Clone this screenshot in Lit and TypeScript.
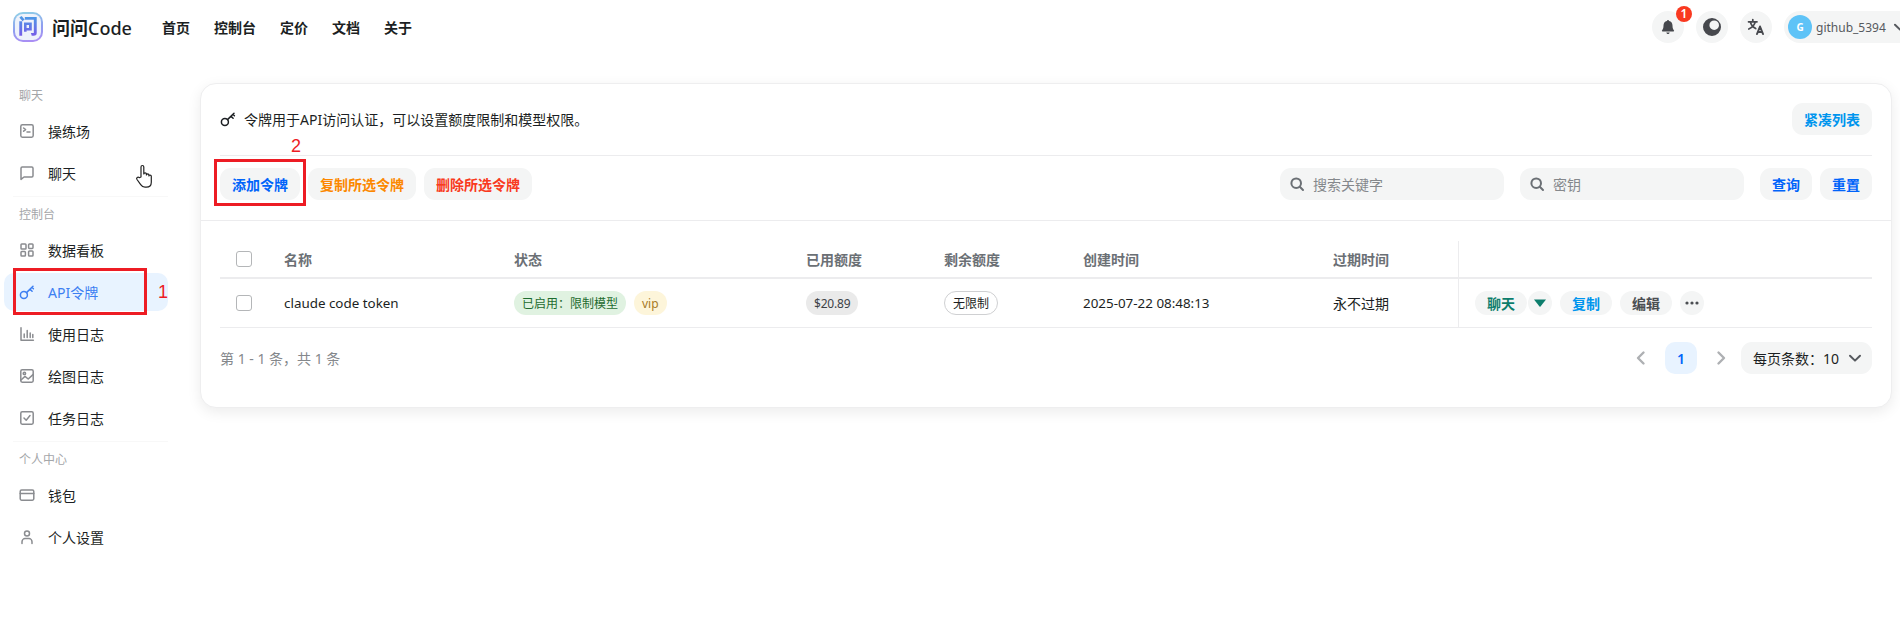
import { LitElement, html, css, svg } from "lit";
import { customElement } from "lit/decorators.js";

const ico = (body: unknown, size = 16) => html`<svg class="ico" width=${size} height=${size} viewBox="0 0 16 16" fill="none" stroke="currentColor" stroke-width="1.5" stroke-linecap="round" stroke-linejoin="round">${body}</svg>`;

const keyPaths = svg`<circle cx="4.9" cy="11.1" r="3.5"/><path d="M7.5 8.6 14 2.2M11 5.2l2.1 2M13 3.3l1.4 1.4"/>`;
const icons: Record<string, unknown> = {
  play: svg`<rect x="1.8" y="1.8" width="12.4" height="12.4" rx="1.6"/><path d="M4.6 5l2 1.6-2 1.6M8 9h3"/>`,
  chat: svg`<path d="M3.2 2h9.6c.7 0 1.2.5 1.2 1.2v7.6c0 .7-.5 1.2-1.2 1.2H5l-3 2.4V3.200c0-.7.5-1.200 1.200-1.200z"/>`,
  grid: svg`<rect x="2" y="2" width="5" height="5" rx=".8"/><rect x="9.600" y="2" width="4.400" height="4.400" rx=".8"/><rect x="2" y="9.600" width="4.400" height="4.400" rx=".8"/><rect x="9.600" y="9" width="4.400" height="5" rx=".8"/>`,
  key: keyPaths,
  bars: svg`<path d="M2 1.800V14.200H14.400M5.200 8v3.600M8.200 4.400v7.200M11.200 7v4.600M13.800 8.600v3"/>`,
  image: svg`<rect x="1.800" y="1.800" width="12.400" height="12.400" rx="1.400"/><circle cx="5.400" cy="5.400" r="1.200"/><path d="M2 12l4-3.600 3.200 2.600L14 6.600"/>`,
  check: svg`<rect x="1.800" y="1.800" width="12.400" height="12.400" rx="1.400"/><path d="M5 8l2.200 2.200L11 5.600"/>`,
  card: svg`<rect x="1.200" y="3" width="13.600" height="10.200" rx="1.400"/><path d="M1.200 6.400h13.600"/>`,
  user: svg`<circle cx="8" cy="4.400" r="2.500"/><path d="M3 14.400v-1.600c0-2 1.600-3.200 3-3.200h4c1.400 0 3 1.200 3 3.200v1.600"/>`,
};

const chevDown = html`<svg class="chev" width="16" height="16" viewBox="0 0 16 16" fill="none" stroke="currentColor" stroke-width="2" stroke-linecap="round" stroke-linejoin="round"><path d="M3 5.800 8 10.600l5-4.800"/></svg>`;
const search = html`<svg class="sicon" width="16" height="16" viewBox="0 0 16 16" fill="none" stroke="#6b7075" stroke-width="2" stroke-linecap="round"><circle cx="7.200" cy="7.200" r="4.800"/><path d="M10.800 10.800l3.200 3.200"/></svg>`;

const nav = [
  { label: "聊天", items: [["play", "操练场"], ["chat", "聊天"]] },
  { label: "控制台", items: [["grid", "数据看板"], ["key", "API令牌"], ["bars", "使用日志"], ["image", "绘图日志"], ["check", "任务日志"]] },
  { label: "个人中心", items: [["card", "钱包"], ["user", "个人设置"]] },
];

@customElement("app-root")
export class AppRoot extends LitElement {
  static styles = css`
    :host { display: block; position: relative; width: 1900px; height: 625px; overflow: hidden; background: #fff; color: #1c1f23; font-family: "Noto Sans", "Noto Sans CJK SC", sans-serif; font-size: 14px; }
    * { box-sizing: border-box; }
    .ico { display: block; flex: none; }
    header { height: 54px; display: flex; align-items: center; padding: 0 0 0 13px; }
    .logo { width: 30px; height: 30px; border-radius: 10px; padding: 2px; background: linear-gradient(170deg, #8fd3e6, #8f9df0 55%, #b08cf5); flex: none; margin-right: 9px; }
    .logo-in { width: 100%; height: 100%; border-radius: 8px; background: #eef2fb; display: flex; align-items: center; justify-content: center; }
    .logo-ch { font-size: 20px; line-height: 22px; font-weight: 900; background: linear-gradient(180deg, #4a9be6, #7b55e8); -webkit-background-clip: text; background-clip: text; color: transparent; }
    .brand { font-size: 18px; font-weight: 500; margin-right: 32px; width: 78px; white-space: nowrap; }
    .brand b { font-weight: 700; }
    .nav { display: flex; gap: 24px; font-weight: 600; }
    .hr { margin-left: auto; display: flex; align-items: center; gap: 12px; margin-right: -8px; }
    .round { width: 32px; height: 32px; border-radius: 50%; background: #f4f5f5; display: flex; align-items: center; justify-content: center; position: relative; color: #46484d; }
    .badge { position: absolute; left: 24px; top: -5px; width: 16px; height: 16px; border-radius: 50%; background: #f93920; color: #fff; font-size: 12px; font-weight: 600; line-height: 16px; text-align: center; }
    .userp { height: 32px; width: 124px; border-radius: 16px 0 0 16px; background: #f4f5f5; display: flex; align-items: center; padding-left: 4px; color: #56595e; }
    .avatar { width: 24px; height: 24px; border-radius: 50%; background: #5ec3f7; color: #fff; font-size: 10px; font-weight: 700; display: flex; align-items: center; justify-content: center; margin-right: 4px; flex: none; }
    .uname { font-size: 12px; white-space: nowrap; margin-right: 6px; }
    .userp .chev { flex: none; color: #56595e; }

    main { display: flex; align-items: flex-start; }
    aside { width: 200px; flex: none; padding: 32px 32px 0 4px; }
    .group-label { height: 20px; line-height: 20px; font-size: 12px; color: #a4a6a9; padding-left: 15px; margin-bottom: 6px; }
    .item { height: 38px; border-radius: 10px; display: flex; align-items: center; padding-left: 15px; gap: 13px; margin-bottom: 4px; }
    .item .ico { color: #8a8c90; }
    .item.active { background: #e8f3ff; color: #3d7ff2; }
    .item.active .ico { color: #3d7ff2; }
    .sep { height: 1px; background: #f8f8f8; margin: 0 0 8px 9px; }

    .card { width: 1692px; height: 325px; border: 1px solid #eeeeef; border-radius: 16px; box-shadow: 0 4px 14px rgba(0, 0, 0, .08); padding: 19px 0 0; margin-top: 29px; background: #fff; }
    .top { margin: 0 19px; padding-bottom: 20px; border-bottom: 1px solid #ececee; display: flex; align-items: center; justify-content: space-between; box-sizing: content-box; height: 32px; }
    .desc { display: flex; align-items: center; gap: 8px; }
    .btn { height: 32px; padding: 0 12px; border-radius: 11px; background: #f4f5f5; font-weight: 600; display: flex; align-items: center; white-space: nowrap; }
    .blue { color: #0064fa; } .sky { color: #0095ee; } .orange { color: #fc8800; } .red { color: #f93920; }
    .tools { margin-top: 12px; padding: 0 19px 20px; display: flex; border-bottom: 1px solid #ececee; }
    .tools-l { display: flex; gap: 8px; }
    .tools-r { margin-left: auto; display: flex; gap: 16px; }
    .input { width: 224px; height: 32px; border-radius: 11px; background: #f4f5f5; display: flex; align-items: center; padding-left: 9px; gap: 8px; color: #85888c; }
    .sicon { flex: none; }
    .pair { display: flex; gap: 8px; }

    .table { margin: 20px 19px 0; }
    .tr { display: grid; grid-template-columns: 48px 230px 292px 138px 139px 250px 141px 414px; align-items: center; }
    .th { height: 38px; border-bottom: 2px solid #ececee; font-weight: 600; color: #6b7075; }
    .td { height: 49px; border-bottom: 1px solid #ececee; }
    .c { padding-left: 16px; height: 100%; display: flex; align-items: center; }
    .act { border-left: 1px solid #ececee; gap: 8px; }
    .box { width: 16px; height: 16px; border: 1.500px solid #b4b6b8; border-radius: 3px; background: #fff; }
    .tag { height: 24px; padding: 0 8px; border-radius: 12px; font-size: 12px; display: inline-flex; align-items: center; white-space: nowrap; }
    .tag + .tag { margin-left: 8px; }
    .g { background: #e0f2e1; color: #1d6b2f; }
    .y { background: #fdf5da; color: #a77b25; }
    .n { background: #eaeaea; color: #3d4147; letter-spacing: -.2px; }
    .w { background: #fff; border: 1px solid #cfd0d2; }
    .latin { font-size: 13.400px; white-space: nowrap; }
    .ab { height: 24px; padding: 0 12px; border-radius: 12px; background: #f4f5f5; font-weight: 600; display: flex; align-items: center; white-space: nowrap; }
    .tl { color: #0c7d6c; } .dk { color: #4b4e52; }
    .sp { display: flex; align-items: center; }
    .sp .drop { margin-left: 1px; width: 24px; padding: 0; justify-content: center; }
    .more { width: 24px; padding: 0; justify-content: center; }

    .foot { margin: 14px 19px 0; display: flex; align-items: center; justify-content: space-between; }
    .count { color: #85888c; }
    .pager { display: flex; align-items: center; }
    .pg { width: 32px; height: 32px; display: flex; align-items: center; justify-content: center; color: #aeb0b3; }
    .pg.on { background: #e8f3ff; color: #0064fa; font-weight: 600; border-radius: 10px; margin: 0 8px; }
    .size { height: 32px; width: 131px; margin-left: 4px; background: #f4f5f5; border-radius: 11px; display: flex; align-items: center; padding-left: 12px; white-space: nowrap; }
    .size .chev { margin-left: 8px; color: #56595e; }

    .mark { position: absolute; border: 3px solid #ed1c24; pointer-events: none; }
    .m1 { left: 13px; top: 268px; width: 134px; height: 47px; }
    .m2 { left: 214px; top: 159px; width: 92px; height: 47px; }
    .num { position: absolute; color: #ed1c24; font-size: 18px; line-height: 20px; font-family: "Liberation Sans", sans-serif; }
    .n1 { left: 158px; top: 282px; }
    .n2 { left: 291px; top: 136px; }
    .hand { position: absolute; left: 135px; top: 164px; }
  `;

  render() {
    return html`
      <header>
        <div class="logo"><div class="logo-in"><span class="logo-ch">问</span></div></div>
        <div class="brand"><b>问问</b><span>Code</span></div>
        <div class="nav"><span>首页</span><span>控制台</span><span>定价</span><span>文档</span><span>关于</span></div>
        <div class="hr">
          <div class="round">
            <svg width="16" height="16" viewBox="0 0 16 16" fill="currentColor"><path d="M8 1c.6 0 1 .4 1.100 1 2.200.5 3.400 2.300 3.400 4.500 0 2.500.6 3.800 1.500 5 .3.400 0 .9-.5.900H2.500c-.5 0-.8-.5-.5-.9.900-1.200 1.500-2.500 1.500-5 0-2.200 1.200-4 3.400-4.500.1-.6.500-1 1.100-1zM6.300 13.600h3.400c-.1.900-.8 1.500-1.700 1.500s-1.600-.6-1.700-1.500z"/></svg>
            <span class="badge">1</span>
          </div>
          <div class="round">
            <svg width="20" height="20" viewBox="0 0 20 20" fill-rule="evenodd" fill="currentColor"><path d="M10 1a9 9 0 1 1 0 18 9 9 0 0 1 0-18zM12.200 3.400a4.800 4.800 0 1 0 0 9.600 4.800 4.800 0 0 0 0-9.600z"/></svg>
          </div>
          <div class="round">
            <svg width="18" height="18" viewBox="0 0 18 18" fill="none" stroke="currentColor" stroke-width="1.700" stroke-linecap="round" stroke-linejoin="round"><path d="M1.500 3.800h8.500M5.800 1.500v2.300M8.300 3.800C7.500 7 5 9.600 1.800 11M3.300 3.800c.7 3 3 5.600 5.400 6.800"/><path stroke-width="2" d="M10 16l3-7.500L16 16M11 14h4"/></svg>
          </div>
          <div class="userp">
            <div class="avatar">G</div>
            <span class="uname">github_5394</span>
            ${chevDown}
          </div>
        </div>
      </header>
      <main>
        <aside>
          ${nav.map((g, i) => html`
            ${i > 0 ? html`<div class="sep"></div>` : ""}
            <div class="group-label">${g.label}</div>
            ${g.items.map(([ic, t]) => html`<div class="item ${t === "API令牌" ? "active" : ""}">${ico(icons[ic])}<span>${t}</span></div>`)}
          `)}
        </aside>
        <section class="card">
          <div class="top">
            <div class="desc">${ico(keyPaths)}<span>令牌用于API访问认证，可以设置额度限制和模型权限。</span></div>
            <div class="btn sky">紧凑列表</div>
          </div>
          <div class="tools">
            <div class="tools-l">
              <div class="btn blue">添加令牌</div>
              <div class="btn orange">复制所选令牌</div>
              <div class="btn red">删除所选令牌</div>
            </div>
            <div class="tools-r">
              <div class="input">${search}<span>搜索关键字</span></div>
              <div class="input">${search}<span>密钥</span></div>
              <div class="pair"><div class="btn blue">查询</div><div class="btn blue">重置</div></div>
            </div>
          </div>
          <div class="table">
            <div class="tr th">
              <div class="c"><span class="box"></span></div>
              <div class="c">名称</div><div class="c">状态</div><div class="c">已用额度</div><div class="c">剩余额度</div><div class="c">创建时间</div><div class="c">过期时间</div>
              <div class="c act"></div>
            </div>
            <div class="tr td">
              <div class="c"><span class="box"></span></div>
              <div class="c"><span class="latin">claude code token</span></div>
              <div class="c"><span class="tag g">已启用：限制模型</span><span class="tag y">vip</span></div>
              <div class="c"><span class="tag n">$20.89</span></div>
              <div class="c"><span class="tag w">无限制</span></div>
              <div class="c"><span class="latin">2025-07-22 08:48:13</span></div>
              <div class="c">永不过期</div>
              <div class="c act">
                <div class="sp">
                  <div class="ab tl">聊天</div>
                  <div class="ab tl drop"><svg width="14" height="10" viewBox="0 0 14 10" fill="currentColor"><path d="M1 1.500h12L7.500 8.500a.7.700 0 0 1-1 0z"/></svg></div>
                </div>
                <div class="ab sky">复制</div>
                <div class="ab dk">编辑</div>
                <div class="ab dk more"><svg width="14" height="4" viewBox="0 0 14 4" fill="currentColor"><circle cx="2" cy="2" r="1.600"/><circle cx="7" cy="2" r="1.600"/><circle cx="12" cy="2" r="1.600"/></svg></div>
              </div>
            </div>
          </div>
          <div class="foot">
            <div class="count">第 1 - 1 条，共 1 条</div>
            <div class="pager">
              <div class="pg"><svg width="16" height="16" viewBox="0 0 16 16" fill="none" stroke="currentColor" stroke-width="2.400" stroke-linecap="round" stroke-linejoin="round"><path d="M10.500 2.500 5 8l5.500 5.500"/></svg></div>
              <div class="pg on">1</div>
              <div class="pg"><svg width="16" height="16" viewBox="0 0 16 16" fill="none" stroke="currentColor" stroke-width="2.400" stroke-linecap="round" stroke-linejoin="round"><path d="M5.500 2.500 11 8l-5.500 5.500"/></svg></div>
              <div class="size"><span>每页条数：10</span>${chevDown}</div>
            </div>
          </div>
        </section>
      </main>
      <svg class="hand" width="22" height="26" viewBox="0 0 22 26" fill="#fff" stroke="#222" stroke-width="1.200" stroke-linejoin="round"><path d="M6 13V3c0-2 2.800-2 2.800 0v7c0-1.500 2.600-1.500 2.600 0v1c0-1.400 2.500-1.400 2.500 0v1c0-1.300 2.400-1.300 2.400.2v6c0 3-2 5-5 5H10c-2 0-3.200-1-4.300-2.600L2 15.500c-1.200-1.800 1-3.200 2.300-1.800z"/></svg>
      <div class="mark m1"></div><div class="mark m2"></div>
      <span class="num n1">1</span><span class="num n2">2</span>
    `;
  }
}
